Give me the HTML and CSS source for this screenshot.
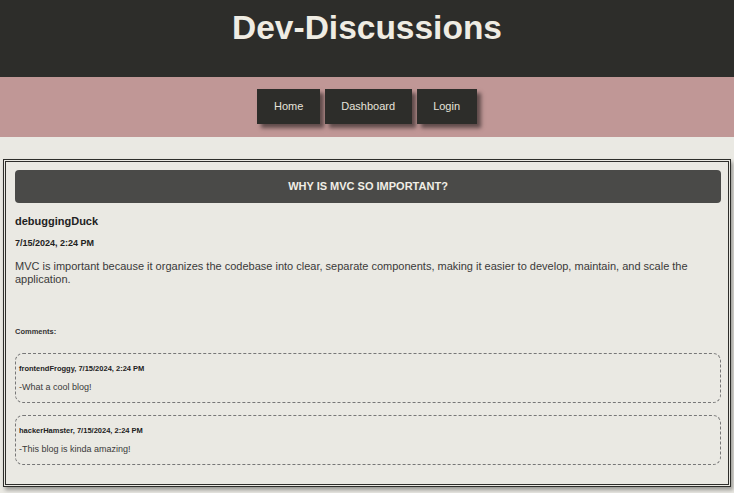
FILE: index.html
```html
<!DOCTYPE html>
<html lang="en">
<head>
<meta charset="utf-8">
<title>Dev-Discussions</title>
<link rel="stylesheet" href="styles.css">
</head>
<body>
<header class="site-header">
  <h1 class="site-title">Dev-Discussions</h1>
</header>
<nav class="site-nav">
  <a class="nav-btn" href="#">Home</a>
  <a class="nav-btn" href="#">Dashboard</a>
  <a class="nav-btn" href="#">Login</a>
</nav>
<main class="page">
  <article class="post-card">
    <h2 class="post-title">Why is MVC so important?</h2>
    <h3 class="post-author">debuggingDuck</h3>
    <p class="post-date">7/15/2024, 2:24 PM</p>
    <p class="post-body">MVC is important because it organizes the codebase into clear, separate components, making it easier to develop, maintain, and scale the application.</p>
    <p class="comments-label">Comments:</p>
    <div class="comment">
      <p class="comment-meta">frontendFroggy, 7/15/2024, 2:24 PM</p>
      <p class="comment-text">-What a cool blog!</p>
    </div>
    <div class="comment">
      <p class="comment-meta">hackerHamster, 7/15/2024, 2:24 PM</p>
      <p class="comment-text">-This blog is kinda amazing!</p>
    </div>
  </article>
</main>
</body>
</html>
```
FILE: styles.css
```css
* { box-sizing: border-box; }

html, body {
  margin: 0;
  padding: 0;
}

body {
  background: #eae9e3;
  font-family: "Liberation Sans", Arial, sans-serif;
  color: #333;
  height: 493px;
  overflow: hidden;
}

.site-header {
  background: #2d2d2a;
  padding: 9px 0 30px;
  text-align: center;
}

.site-title {
  margin: 0;
  font-size: 33.5px;
  line-height: 38px;
  font-weight: bold;
  color: #efece3;
}

.site-nav {
  background: #c09796;
  display: flex;
  justify-content: center;
  gap: 5px;
  padding: 12px 0 13px;
}

.nav-btn {
  display: block;
  background: #2d2d2a;
  color: #e6e3da;
  font-size: 11px;
  line-height: 35px;
  padding: 0 16.5px;
  text-decoration: none;
  box-shadow: 4px 4px 4px rgba(0, 0, 0, 0.5);
}

.page {
  padding: 22px 3px 0;
}

.post-card {
  border: 3px double #2d2d2a;
  padding: 8px 7px 19px 9px;
  box-shadow: 2px 3px 4px rgba(0, 0, 0, 0.35);
}

.post-title {
  margin: 0;
  background: #4a4a48;
  color: #f1eee6;
  border-radius: 4px;
  text-align: center;
  text-transform: uppercase;
  font-size: 11px;
  line-height: 33px;
  font-weight: bold;
}

.post-author {
  margin: 12px 0 0;
  font-size: 11px;
  line-height: 13px;
  font-weight: bold;
  color: #222;
}

.post-date {
  margin: 10px 0 0;
  font-size: 9px;
  line-height: 11px;
  font-weight: bold;
  color: #222;
}

.post-body {
  margin: 11px 0 0;
  font-size: 11px;
  line-height: 13px;
  color: #3a3a3a;
}

.comments-label {
  margin: 41px 0 0;
  font-size: 7.5px;
  line-height: 9px;
  font-weight: bold;
  color: #333;
}

.comment {
  margin-top: 17px;
  border: 1px dashed #777;
  border-radius: 8px;
  padding: 10px 4px 9px 3px;
}

.comment + .comment {
  margin-top: 12px;
}

.comment-meta {
  margin: 0;
  font-size: 7.5px;
  line-height: 9px;
  font-weight: bold;
  color: #222;
}

.comment-text {
  margin: 9px 0 0;
  font-size: 9px;
  line-height: 11px;
  color: #3a3a3a;
}
```
